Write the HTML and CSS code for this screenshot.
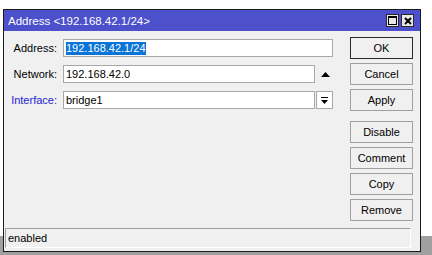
FILE: index.html
```html
<!DOCTYPE html>
<html lang="en">
<head>
    <meta charset="UTF-8">
    <title>Address &lt;192.168.42.1/24&gt;</title>
    <link rel="stylesheet" href="styles.css">
</head>
<body>
    <div class="desktop">
        <div class="window">
            <div class="title-bar">
                <span class="title-text">Address &lt;192.168.42.1/24&gt;</span>
                <div class="title-buttons">
                    <span class="title-btn">
                        <svg width="9" height="9" viewBox="0 0 9 9"><rect x="0.5" y="0.5" width="8" height="8" fill="none" stroke="#000"/><rect x="0" y="0" width="9" height="2" fill="#000"/></svg>
                    </span>
                    <span class="title-btn">
                        <svg width="8" height="8" viewBox="0 0 8 8"><path d="M1 1 L7 7 M7 1 L1 7" stroke="#000" stroke-width="2"/></svg>
                    </span>
                </div>
            </div>
            <div class="window-body">
                <div class="main">
                    <div class="form">
                        <label class="label">Address:</label>
                        <div class="field wide"><span class="selected">192.168.42.1/24</span></div>

                        <label class="label">Network:</label>
                        <div class="field">192.168.42.0</div>
                        <div class="arrow-cell">
                            <svg width="9" height="5" viewBox="0 0 9 5"><polygon points="4.5,0 9,5 0,5" fill="#000"/></svg>
                        </div>

                        <label class="label link">Interface:</label>
                        <div class="field">bridge1</div>
                        <div class="drop-btn">
                            <svg width="7" height="7" viewBox="0 0 7 7"><rect x="0" y="0" width="7" height="1" fill="#000"/><polygon points="0,3 7,3 3.5,7" fill="#000"/></svg>
                        </div>
                    </div>
                    <div class="buttons">
                        <button class="default">OK</button>
                        <button>Cancel</button>
                        <button class="group-end">Apply</button>
                        <button>Disable</button>
                        <button>Comment</button>
                        <button>Copy</button>
                        <button>Remove</button>
                    </div>
                </div>
                <div class="status">enabled</div>
            </div>
        </div>
    </div>
</body>
</html>
```

FILE: styles.css
```css
body {
    margin: 0;
    font-family: "Liberation Sans", Arial, sans-serif;
    font-size: 11px;
    color: #000;
}

.desktop {
    width: 432px;
    height: 255px;
    box-sizing: border-box;
    padding: 9px 11px 0 3px;
    background: linear-gradient(#fff 236px, #a0a0a0 236px);
    overflow: hidden;
}

.window {
    width: 418px;
    height: 243px;
    box-sizing: border-box;
    border: 1px solid #1c1c1c;
    background: #f0f0f0;
    display: flex;
    flex-direction: column;
}

.title-bar {
    height: 21px;
    background: #4c50cb;
    color: #fff;
    display: flex;
    align-items: center;
    justify-content: space-between;
    padding: 0 6px 0 4px;
    font-size: 11.5px;
}

.title-buttons {
    display: flex;
    gap: 2px;
}

.title-btn {
    width: 13px;
    height: 13px;
    box-sizing: border-box;
    border: 1px solid #2a2a2a;
    background: #e8e8e8;
    display: flex;
    align-items: center;
    justify-content: center;
}

.window-body {
    flex: 1;
    display: flex;
    flex-direction: column;
    padding: 6px 7px 3px 0;
}

.main {
    display: flex;
}

.form {
    width: 329px;
    margin-right: 17px;
    display: grid;
    grid-template-columns: 59px 252px 18px;
    grid-auto-rows: 22px;
    row-gap: 4px;
    align-items: center;
    align-content: start;
}

.label {
    text-align: right;
    padding-right: 6px;
}

.label.link {
    color: #2323d6;
}

.field {
    height: 18px;
    box-sizing: border-box;
    border: 1px solid #a8a8a8;
    background: #fff;
    padding: 0 2px;
    line-height: 16px;
    white-space: nowrap;
}

.field.wide {
    grid-column: 2 / 4;
}

.selected {
    background: #0a74d8;
    color: #fff;
    display: inline-block;
    line-height: 13px;
}

.arrow-cell {
    display: flex;
    justify-content: center;
    padding-left: 2px;
}

.drop-btn {
    height: 18px;
    width: 17px;
    margin-left: 1px;
    box-sizing: border-box;
    border: 1px solid #a8a8a8;
    background: #fff;
    display: flex;
    align-items: center;
    justify-content: center;
}

.buttons {
    display: flex;
    flex-direction: column;
    gap: 4px;
}

.buttons button {
    width: 63px;
    height: 22px;
    border: 1px solid #a0a0a0;
    background: #f0f0f0;
    font-family: inherit;
    font-size: 11px;
    color: #000;
    padding: 0;
}

.buttons button.default {
    border-color: #2a2a2a;
}

.buttons button.group-end {
    margin-bottom: 6px;
}

.status {
    margin: auto 2px 0 1px;
    height: 20px;
    box-sizing: border-box;
    border-top: 1px solid #a0a0a0;
    border-left: 1px solid #a0a0a0;
    border-bottom: 1px solid #fff;
    border-right: 1px solid #fff;
    padding-left: 2px;
    line-height: 18px;
}
```
